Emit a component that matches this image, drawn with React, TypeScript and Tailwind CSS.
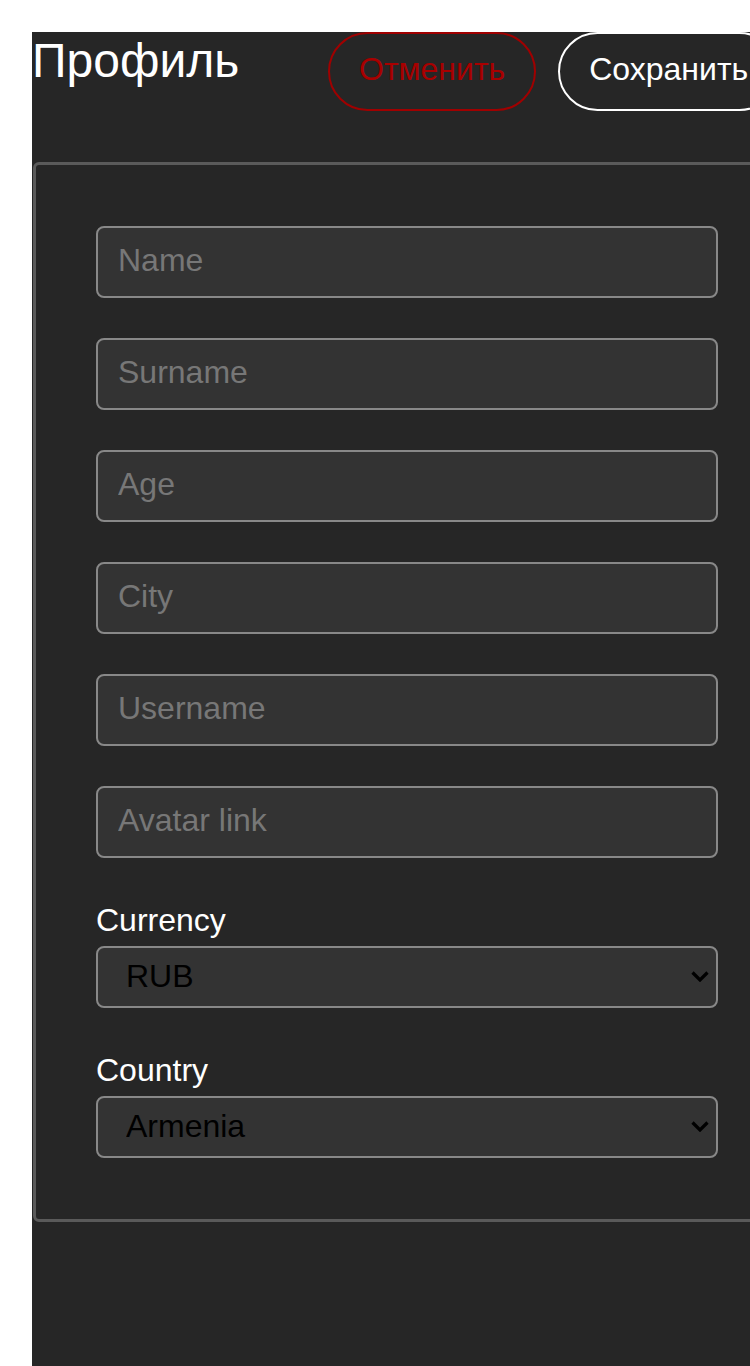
import React, { useState } from 'react';

const fields = ['Name', 'Surname', 'Age', 'City', 'Username', 'Avatar link'];

function Select({ label, value, options, onChange }: { label: string; value: string; options: string[]; onChange: (v: string) => void }) {
  return (
    <label className="flex flex-col">
      <span className="pt-[4px] text-[32px] leading-[37px] text-white">{label}</span>
      <div className="relative mt-[7px] w-[622px]">
        <select
          value={value}
          onChange={(e) => onChange(e.target.value)}
          className="h-[62px] w-full appearance-none rounded-lg border-2 border-[#888] bg-[#333] pb-[3px] pl-[28px] pr-10 text-[32px] text-black outline-none"
        >
          {options.map((o) => (
            <option key={o}>{o}</option>
          ))}
        </select>
        {/* chevron */}
        <svg
          className="pointer-events-none absolute right-[9px] top-[25px]"
          width="18"
          height="11"
          viewBox="0 0 18 11"
          fill="none"
        >
          <path d="M1.5 1.5 L9 9 L16.5 1.5" stroke="#000" strokeWidth="3.2" />
        </svg>
      </div>
    </label>
  );
}

export default function App() {
  const [values, setValues] = useState<Record<string, string>>({});
  const [currency, setCurrency] = useState('RUB');
  const [country, setCountry] = useState('Armenia');

  return (
    <div className="w-screen min-h-screen overflow-hidden bg-white pl-8 pt-8 font-['Liberation_Sans',Arial,sans-serif]">
      <div className="w-[800px] min-h-[1334px] bg-[#262626]">
        {/* Header */}
        <div className="flex items-start">
          <h1 className="w-[296px] text-[48px] leading-[58px] text-white">Профиль</h1>
          <div className="flex gap-[22px]">
            <button className="h-[79px] rounded-full border-2 border-[#a00000] px-[29px] pb-[6px] text-[32px] text-[#a80000]">
              Отменить
            </button>
            <button className="h-[79px] rounded-full border-2 border-white px-[29px] pb-[6px] text-[32px] text-white">
              Сохранить
            </button>
          </div>
        </div>

        {/* Form card */}
        <div className="ml-px mt-[51px] rounded-md border-[3px] border-[#5a5a5a] px-[60px] pb-[61px] pt-[61px]">
          <div className="flex flex-col gap-10">
            {fields.map((f) => (
              <input
                key={f}
                type="text"
                placeholder={f}
                value={values[f] || ''}
                onChange={(e) => setValues({ ...values, [f]: e.target.value })}
                className="h-[72px] w-[622px] rounded-lg border-2 border-[#888] bg-[#333] px-[20px] pb-[4px] text-[32px] text-white outline-none placeholder:text-[#777]"
              />
            ))}
            <Select label="Currency" value={currency} options={['RUB', 'USD', 'EUR']} onChange={setCurrency} />
            <Select label="Country" value={country} options={['Armenia', 'Russia', 'Georgia']} onChange={setCountry} />
          </div>
        </div>
      </div>
    </div>
  );
}
